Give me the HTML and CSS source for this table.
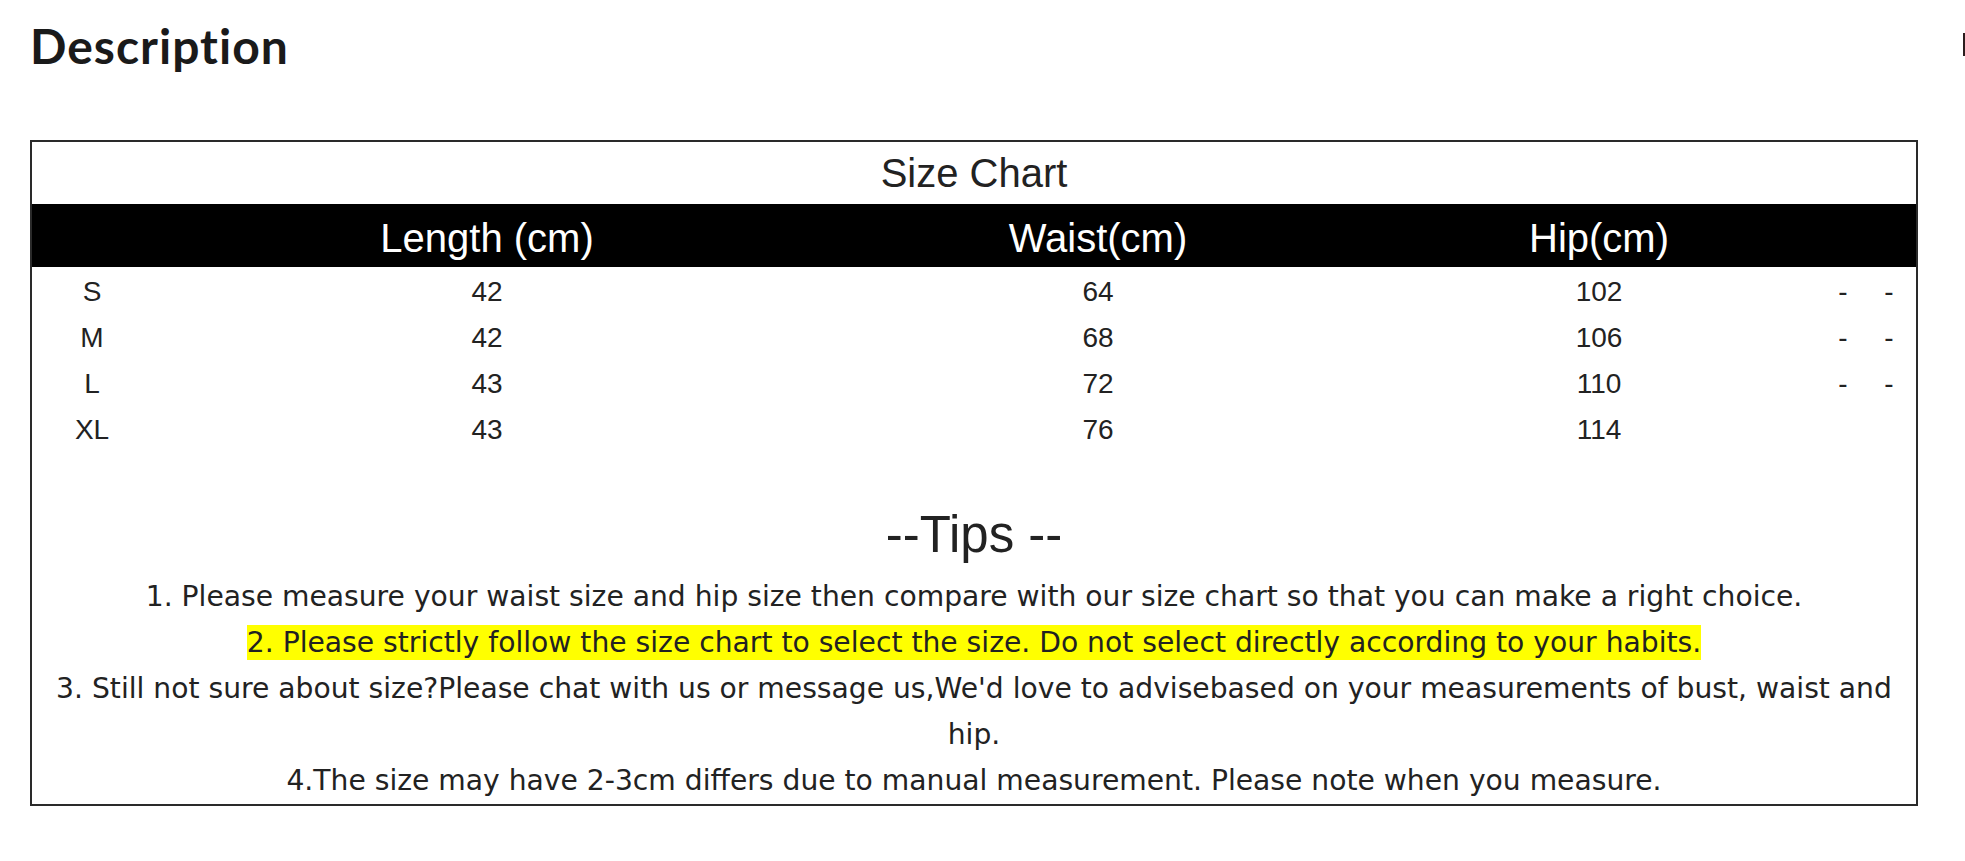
FILE: index.html
```html
<!DOCTYPE html>
<html lang="en">
<head>
<meta charset="utf-8">
<title>Description</title>
<link rel="stylesheet" href="styles.css">
</head>
<body>
<div class="page">
  <h2 class="desc-title">Description</h2>
  <div class="chart">
    <div class="chart-title">Size Chart</div>
    <div class="row head">
      <div></div><div>Length (cm)</div><div>Waist(cm)</div><div>Hip(cm)</div><div></div><div></div>
    </div>
    <div class="rows">
      <div class="row"><div>S</div><div>42</div><div>64</div><div>102</div><div>-</div><div>-</div></div>
      <div class="row"><div>M</div><div>42</div><div>68</div><div>106</div><div>-</div><div>-</div></div>
      <div class="row"><div>L</div><div>43</div><div>72</div><div>110</div><div>-</div><div>-</div></div>
      <div class="row"><div>XL</div><div>43</div><div>76</div><div>114</div><div></div><div></div></div>
    </div>
    <div class="tips">
      <div class="tips-title">--Tips --</div>
      <p>1. Please measure your waist size and hip size then compare with our size chart so that you can make a right choice.</p>
      <p><span class="hl">2. Please strictly follow the size chart to select the size. Do not select directly according to your habits.</span></p>
      <p>3. Still not sure about size?Please chat with us or message us,We'd love to advisebased on your measurements of bust, waist and hip.</p>
      <p>4.The size may have 2-3cm differs due to manual measurement. Please note when you measure.</p>
    </div>
  </div>
  <div class="edge-mark"></div>
</div>
</body>
</html>
```

FILE: styles.css
```css
html, body {
  margin: 0;
  padding: 0;
  background: #ffffff;
}

.page {
  position: relative;
  width: 1965px;
  height: 861px;
  padding: 0 0 0 30px;
  box-sizing: border-box;
  overflow: hidden;
}

.desc-title {
  margin: 0;
  padding-top: 17px;
  height: 140px;
  box-sizing: border-box;
  font-family: Lato, "Open Sans", sans-serif;
  font-weight: 700;
  font-size: 48px;
  line-height: 58px;
  letter-spacing: 1px;
  color: #1a1a1a;
}

.chart {
  width: 1888px;
  box-sizing: border-box;
  border: 2px solid #2a2a2a;
  font-family: "Liberation Sans", Arial, sans-serif;
  color: #222222;
}

.chart-title {
  height: 62px;
  line-height: 62px;
  font-size: 40px;
  text-align: center;
}

.row {
  display: grid;
  grid-template-columns: 120px 670px 552px 450px 38px 1fr;
  text-align: center;
}

.head {
  height: 63px;
  box-sizing: border-box;
  padding-top: 5px;
  line-height: 58px;
  background: #000000;
  color: #ffffff;
  font-size: 40px;
}

.rows {
  padding-top: 2px;
}

.rows .row {
  height: 46px;
  line-height: 46px;
  font-size: 28px;
}

.tips {
  padding-top: 52px;
  text-align: center;
}

.tips-title {
  height: 60px;
  line-height: 60px;
  font-size: 51px;
  margin-bottom: 9px;
}

.tips p {
  margin: 0;
  padding: 0 10px;
  font-family: "DejaVu Sans", Verdana, sans-serif;
  font-size: 28.2px;
  line-height: 46px;
  color: #222222;
}

.hl {
  background: #ffff00;
  padding: 1px 0;
}

.edge-mark {
  position: absolute;
  left: 1963px;
  top: 33px;
  width: 2px;
  height: 23px;
  background: #2b1d1d;
}
```
